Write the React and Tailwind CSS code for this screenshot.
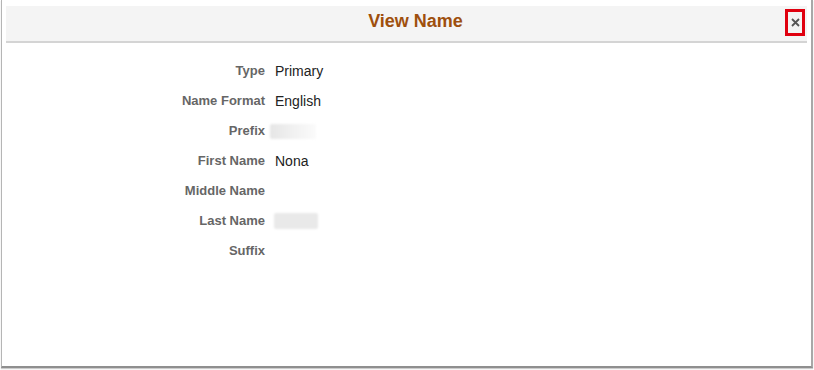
import React from 'react';

const rows = [
  { label: 'Type', value: 'Primary' },
  { label: 'Name Format', value: 'English' },
  { label: 'Prefix', blur: 'prefix' },
  { label: 'First Name', value: 'Nona' },
  { label: 'Middle Name' },
  { label: 'Last Name', blur: 'last' },
  { label: 'Suffix' },
];

function Blurred({ kind }) {
  if (kind === 'prefix') {
    return (
      <div className="h-[15px] w-[46px] -ml-[5px] rounded-[2px] bg-gradient-to-r from-[#e6e6e6] via-[#f1f1f1] to-[#fbfbfb] blur-[1px]" />
    );
  }
  return <div className="h-[16px] w-[44px] -ml-[1px] rounded-[2px] bg-[#e9e9e9] blur-[1px]" />;
}

export default function App() {
  return (
    <div className="w-[814px] h-[370px] bg-white font-['Liberation_Sans',Arial,sans-serif]">
      <div className="ml-[1px] w-[812px] h-[368px] bg-white border-l border-r-2 border-b-2 border-l-[#b5b5b5] border-r-[#a8a8a8] border-b-[#8f8f8f] shadow-[0_1px_1px_rgba(0,0,0,0.2)] pt-[6px] px-[4px]">
        <div className="relative h-[37px] bg-[#f4f4f4] border-b-2 border-[#d4d4d4] flex items-center justify-center pl-[18px]">
          <h1 className="text-[18px] font-bold text-[#9e4f0d] leading-none -mt-[6px]">View Name</h1>
          <button
            type="button"
            className="absolute right-[2px] top-[3px] w-[20px] h-[27px] border-[3px] border-[#e0000f] flex items-center justify-center"
          >
            <svg width="9" height="9" viewBox="0 0 9 9" className="ml-[1px]">
              <path d="M1 1L8 8M8 1L1 8" stroke="#555" strokeWidth="1.8" />
            </svg>
          </button>
        </div>
        <div className="pt-[13px]">
          {rows.map((r) => (
            <div key={r.label} className="flex items-center h-[30px]">
              <div className="w-[259px] text-right text-[13px] font-bold text-[#666]">{r.label}</div>
              <div className="ml-[10px] text-[14px] text-[#222]">
                {r.blur ? <Blurred kind={r.blur} /> : r.value}
              </div>
            </div>
          ))}
        </div>
      </div>
    </div>
  );
}
